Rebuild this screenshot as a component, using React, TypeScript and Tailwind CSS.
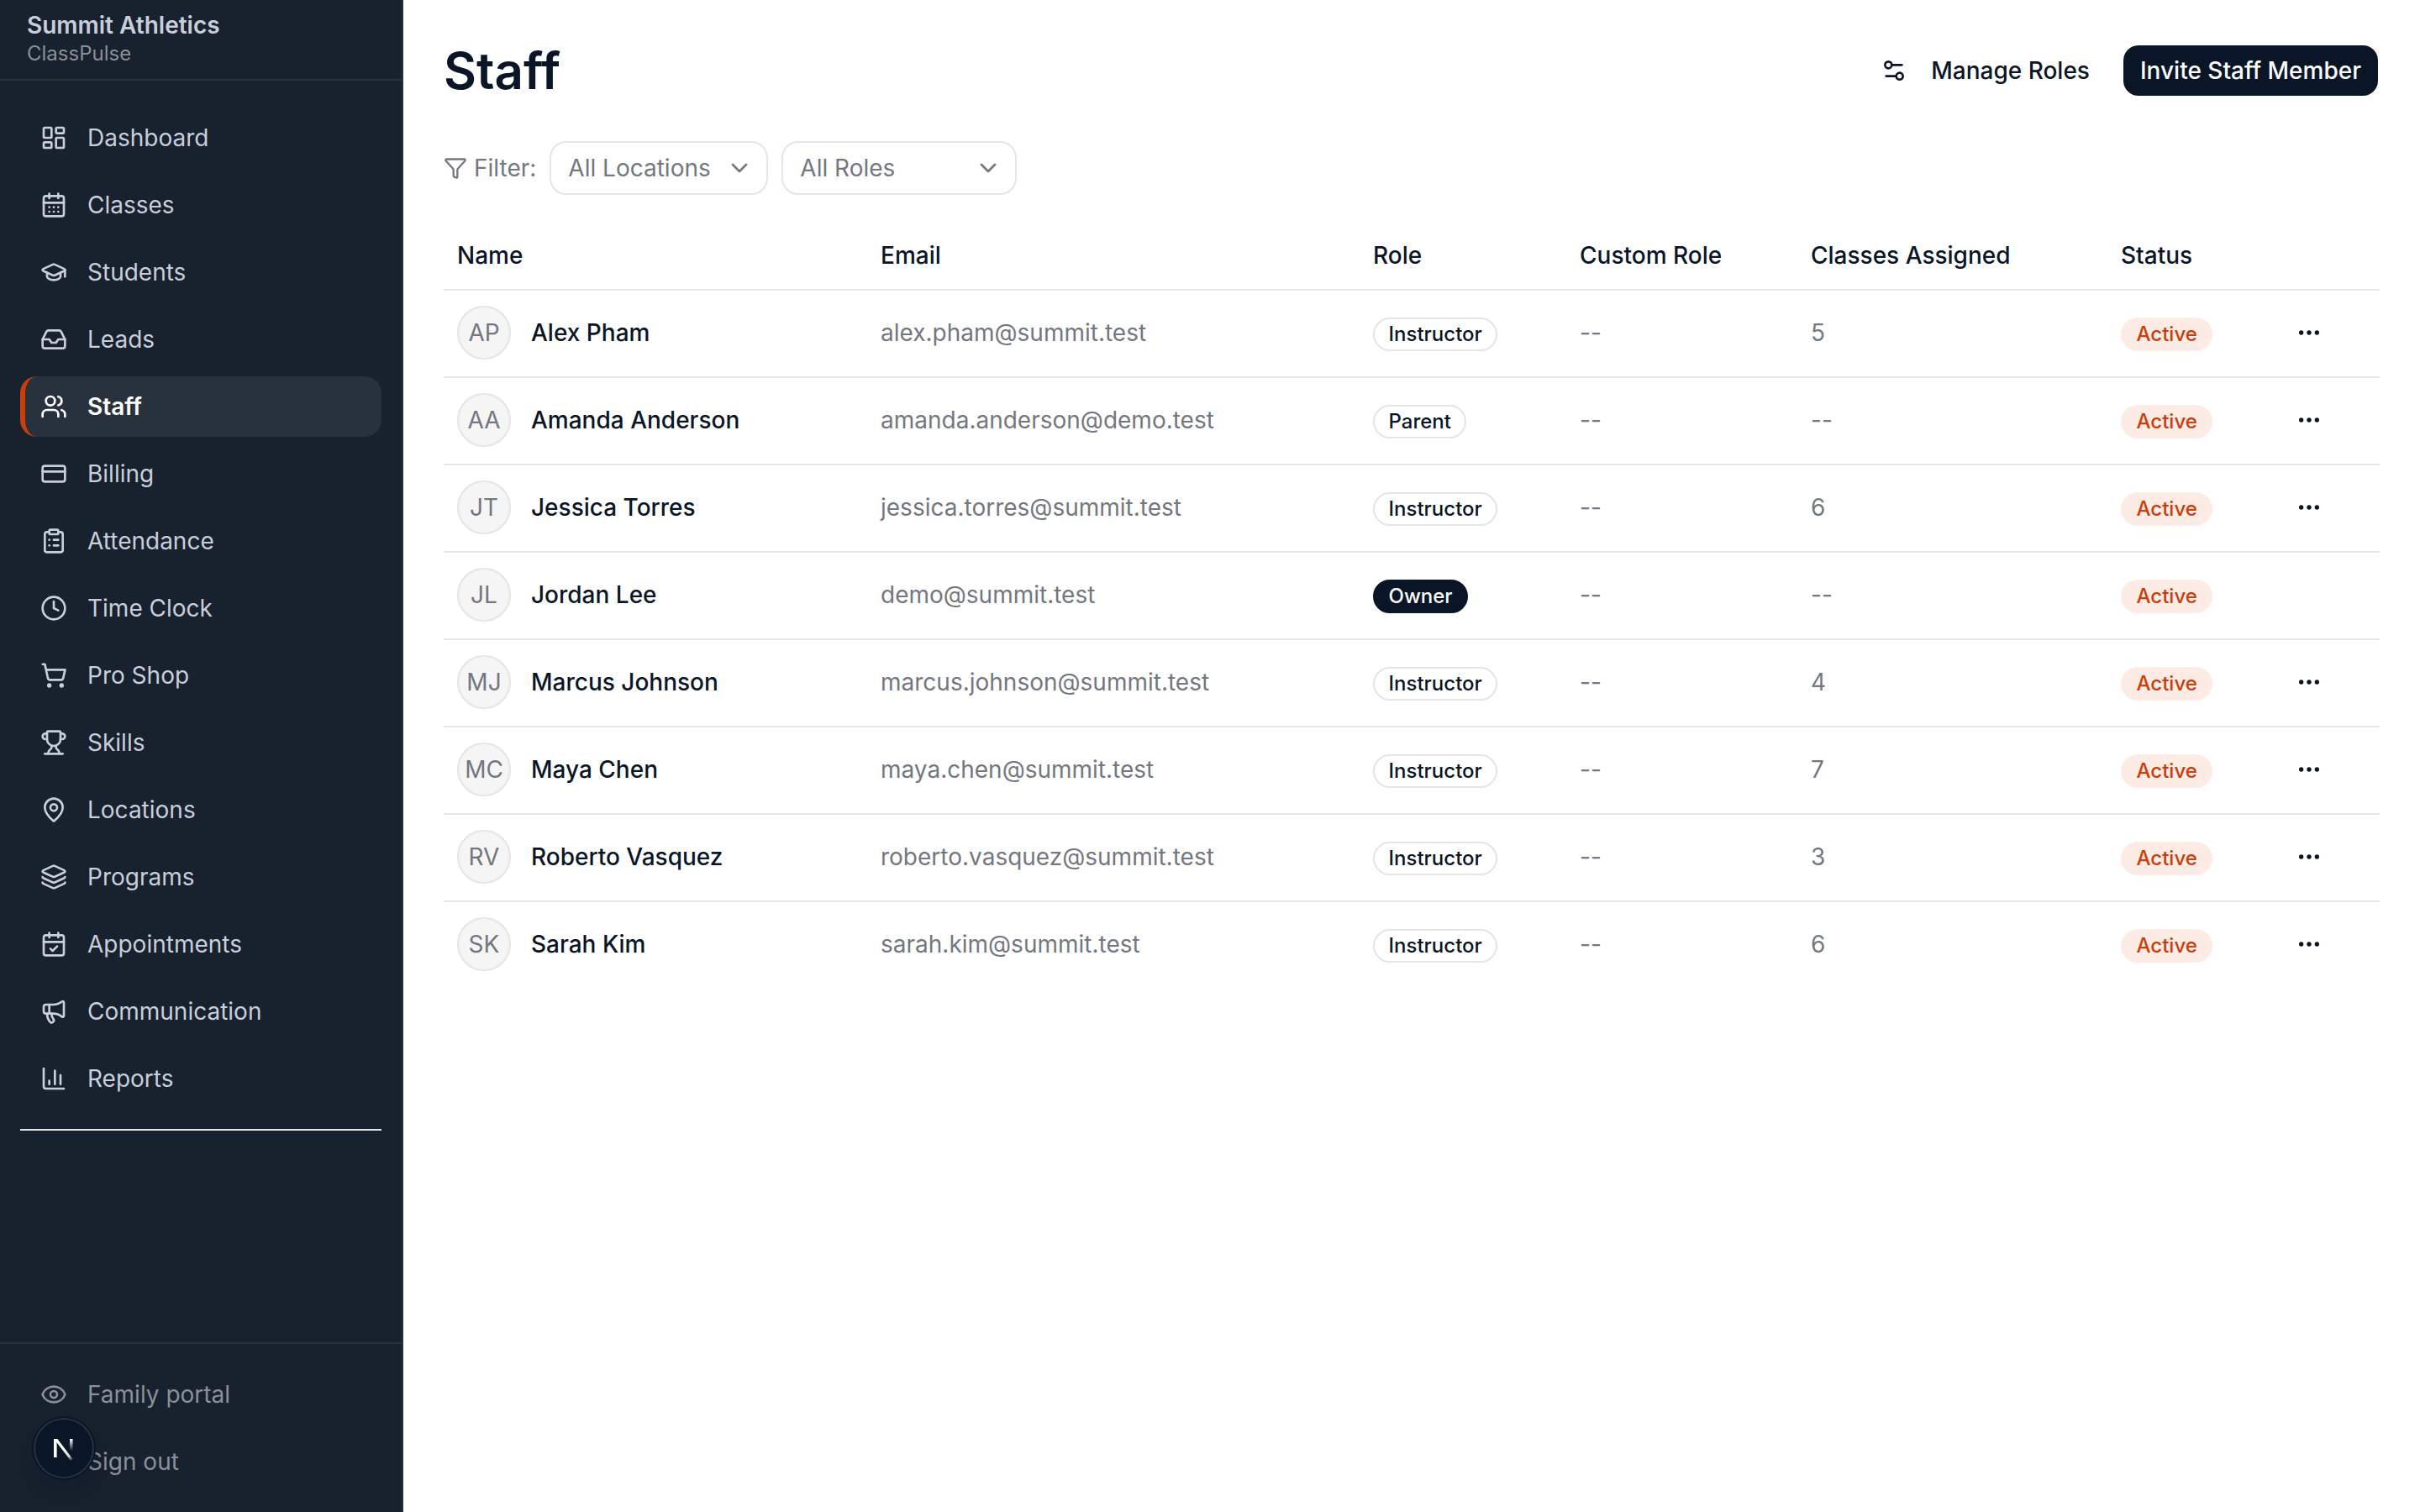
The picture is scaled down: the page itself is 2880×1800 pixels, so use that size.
import type { ReactNode } from "react";
import {
  CalendarCheck,
  CalendarDays,
  ChartColumn,
  ChevronDown,
  ClipboardList,
  Clock,
  CreditCard,
  Ellipsis,
  Eye,
  Funnel,
  GraduationCap,
  Inbox,
  Layers,
  LayoutDashboard,
  LogOut,
  MapPin,
  Megaphone,
  Settings2,
  ShoppingCart,
  Trophy,
  Users,
  type LucideIcon,
} from "lucide-react";

const navItems: { label: string; icon: LucideIcon }[] = [
  { label: "Dashboard", icon: LayoutDashboard },
  { label: "Classes", icon: CalendarDays },
  { label: "Students", icon: GraduationCap },
  { label: "Leads", icon: Inbox },
  { label: "Staff", icon: Users },
  { label: "Billing", icon: CreditCard },
  { label: "Attendance", icon: ClipboardList },
  { label: "Time Clock", icon: Clock },
  { label: "Pro Shop", icon: ShoppingCart },
  { label: "Skills", icon: Trophy },
  { label: "Locations", icon: MapPin },
  { label: "Programs", icon: Layers },
  { label: "Appointments", icon: CalendarCheck },
  { label: "Communication", icon: Megaphone },
  { label: "Reports", icon: ChartColumn },
];

const staff = [
  { name: "Alex Pham", email: "alex.pham@summit.test", role: "Instructor", classes: 5 },
  { name: "Amanda Anderson", email: "amanda.anderson@demo.test", role: "Parent", classes: 0 },
  { name: "Jessica Torres", email: "jessica.torres@summit.test", role: "Instructor", classes: 6 },
  { name: "Jordan Lee", email: "demo@summit.test", role: "Owner", classes: 0 },
  { name: "Marcus Johnson", email: "marcus.johnson@summit.test", role: "Instructor", classes: 4 },
  { name: "Maya Chen", email: "maya.chen@summit.test", role: "Instructor", classes: 7 },
  { name: "Roberto Vasquez", email: "roberto.vasquez@summit.test", role: "Instructor", classes: 3 },
  { name: "Sarah Kim", email: "sarah.kim@summit.test", role: "Instructor", classes: 6 },
];

function initials(name: string) {
  return name
    .split(" ")
    .map((part) => part[0])
    .join("");
}

function NavLink({ label, icon: Icon, active, muted }: { label: string; icon: LucideIcon; active?: boolean; muted?: boolean }) {
  const base = "flex h-[72px] items-center gap-6 rounded-[20px] text-[28px]";
  const look = active
    ? "border-l-[6px] border-[#cc3d0a] bg-[#28323e] pl-[18px] font-semibold text-white"
    : muted
      ? "pl-6 text-[#8b9099]"
      : "pl-6 text-[#c9cedb]";

  return (
    <a href="#" className={`${base} ${look}`}>
      <Icon className="size-8" />
      {label}
    </a>
  );
}

function NextBadge() {
  return (
    <div className="fixed bottom-10 left-10 flex size-[72px] items-center justify-center rounded-full bg-[#0a1628] shadow-[0_0_0_2px_#0a1628,inset_0_0_0_2px_#25303d,0_16px_32px_-8px_rgba(10,22,40,0.5)]">
      <svg width="40" height="40" viewBox="0 0 40 40" fill="none">
        <defs>
          <linearGradient id="diag" x1="20" y1="22" x2="30" y2="35" gradientUnits="userSpaceOnUse">
            <stop stopColor="white" />
            <stop offset="0.6" stopColor="white" stopOpacity="0.8" />
            <stop offset="1" stopColor="white" stopOpacity="0" />
          </linearGradient>
          <linearGradient id="stem" x1="0" y1="9" x2="0" y2="23" gradientUnits="userSpaceOnUse">
            <stop stopColor="white" />
            <stop offset="1" stopColor="white" stopOpacity="0" />
          </linearGradient>
        </defs>
        <path d="M8 9h4.4l18.4 24.2-2.4 2L11.6 13.2V31H8z" fill="url(#diag)" />
        <path d="M27 9h3.6v15H27z" fill="url(#stem)" />
      </svg>
    </div>
  );
}

function Sidebar() {
  return (
    <aside className="flex w-[480px] shrink-0 flex-col border-r-2 border-[#28323e] bg-[#18212e]">
      <div className="h-24 border-b-2 border-[#28323e] px-8 pt-3">
        <div className="text-[28px] leading-9 font-semibold text-[#c9cedb]">Summit Athletics</div>
        <div className="text-2xl text-[#8b8f95]">ClassPulse</div>
      </div>
      <nav className="flex flex-1 flex-col gap-2 px-6 pt-8">
        {navItems.map((item) => (
          <NavLink key={item.label} {...item} active={item.label === "Staff"} />
        ))}
        <div className="mt-4 h-0.5 bg-[#e5e5e5]" />
      </nav>
      <div className="flex flex-col gap-2 border-t-2 border-[#28323e] p-6">
        <NavLink label="Family portal" icon={Eye} muted />
        <NavLink label="Sign out" icon={LogOut} muted />
      </div>
    </aside>
  );
}

function FilterSelect({ label, className }: { label: string; className: string }) {
  return (
    <button className={`flex h-16 items-center justify-between rounded-[20px] border-2 border-[#e5e5e5] pr-4 pl-5 ${className}`}>
      {label}
      <ChevronDown className="size-8" />
    </button>
  );
}

function RoleBadge({ role }: { role: string }) {
  const look = role === "Owner" ? "border-[#0a1628] bg-[#0a1628] text-white" : "border-[#e5e5e5]";
  return <Badge className={look}>{role}</Badge>;
}

function Badge({ className, children }: { className: string; children: ReactNode }) {
  return (
    <span className={`mt-1 inline-flex h-10 items-center rounded-full border-2 px-[16.5px] align-middle text-2xl font-medium ${className}`}>
      {children}
    </span>
  );
}

function StaffTable() {
  return (
    <table className="mt-8 w-full table-fixed border-separate border-spacing-0 text-left">
      <colgroup>
        <col className="w-[504px]" />
        <col className="w-[586px]" />
        <col className="w-[246px]" />
        <col className="w-[275px]" />
        <col className="w-[369px]" />
        <col className="w-[208px]" />
        <col />
      </colgroup>
      <thead>
        <tr className="*:h-[82px] *:border-b-2 *:border-[#e5e5e5] *:px-4 *:font-medium">
          <th>Name</th>
          <th>Email</th>
          <th>Role</th>
          <th>Custom Role</th>
          <th>Classes Assigned</th>
          <th>Status</th>
          <th />
        </tr>
      </thead>
      <tbody className="text-[#737780]">
        {staff.map((s) => (
          <tr key={s.email} className="*:h-[104px] *:border-b-2 *:border-[#e5e5e5] *:px-4 *:pb-0.5 last:*:border-transparent">
            <td>
              <div className="flex items-center gap-6">
                <div className="flex size-16 items-center justify-center rounded-full border-2 border-[#e5e5e5] bg-[#f5f5f5]">
                  {initials(s.name)}
                </div>
                <span className="font-medium text-[#0a1628]">{s.name}</span>
              </div>
            </td>
            <td>{s.email}</td>
            <td className="text-[#0a1628]">
              <RoleBadge role={s.role} />
            </td>
            <td>--</td>
            <td>{s.classes || "--"}</td>
            <td>
              <Badge className="border-transparent bg-[#fdebe5] text-[#cc3d0a]">Active</Badge>
            </td>
            <td>
              {s.role !== "Owner" && (
                <button className="-ml-4 flex size-16 items-center justify-center text-[#0a1628]">
                  <Ellipsis className="size-8" />
                </button>
              )}
            </td>
          </tr>
        ))}
      </tbody>
    </table>
  );
}

export default function App() {
  return (
    <div className="flex h-screen bg-white font-['Inter',sans-serif] text-[28px] leading-10 text-[#0a1628]">
      <Sidebar />
      <main className="flex-1 px-12 pt-12">
        <div className="flex h-[72px] items-center justify-between">
          <h1 className="text-6xl leading-[72px] font-semibold">Staff</h1>
          <div className="flex items-center gap-4">
            <button className="flex h-16 items-center gap-7 px-[22px] font-medium">
              <Settings2 className="size-8" />
              Manage Roles
            </button>
            <button className="h-16 rounded-[20px] border-2 border-transparent bg-[#0a1628] bg-clip-padding px-5 font-medium text-white">
              Invite Staff Member
            </button>
          </div>
        </div>

        <div className="mt-12 flex items-center gap-4 text-[#737780]">
          <div className="flex items-center gap-2">
            <Funnel className="size-7" />
            Filter:
          </div>
          <FilterSelect label="All Locations" className="w-[260px]" />
          <FilterSelect label="All Roles" className="w-[280px]" />
        </div>

        <StaffTable />
      </main>
      <NextBadge />
    </div>
  );
}
